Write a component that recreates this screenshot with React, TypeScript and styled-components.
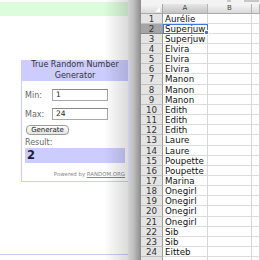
import React from "react";
import styled, { createGlobalStyle } from "styled-components";

const Global = createGlobalStyle`
  html, body { margin: 0; padding: 0; background: #fff; }
  body { width: 260px; height: 260px; overflow: hidden; font-family: "DejaVu Sans", Verdana, sans-serif; }
`;

const Screen = styled.div`
  display: flex;
  width: 260px;
  height: 260px;
  overflow: hidden;
`;

const WebPage = styled.div`
  position: relative;
  width: 128px;
  flex: none;
  display: flex;
  flex-direction: column;
  padding-top: 2px;
  box-sizing: border-box;
  background: #fff;
  &::after {
    content: "";
    position: absolute;
    top: 0;
    right: 0;
    width: 24px;
    height: 100%;
    background: linear-gradient(to right, rgba(0,0,0,0), rgba(0,0,0,0.14));
  }
`;

const GreenBand = styled.div`
  height: 14px;
  background: #dcfcdc;
`;

const Widget = styled.div`
  margin: 44px 0 0 21px;
  width: 108px;
  border: 1px solid #ccccff;
  box-sizing: border-box;
  display: flex;
  flex-direction: column;
  font-size: 8px;
  color: #666;
`;

const Header = styled.div`
  background: #ccccff;
  color: #333;
  text-align: center;
  font-size: 8px;
  line-height: 10.5px;
  height: 21px;
  margin-top: -1px;
`;

const Body = styled.div`
  display: flex;
  flex-direction: column;
  padding: 0 2px 0 3px;
`;

const FieldRow = styled.label<{ $top: number }>`
  display: flex;
  align-items: center;
  height: 12px;
  margin-top: ${(p) => p.$top}px;
`;

const FieldLabel = styled.span`
  width: 27px;
  color: #666;
`;

const Input = styled.div`
  width: 56px;
  height: 12px;
  box-sizing: border-box;
  border: 1px solid #a8a8a8;
  border-top-color: #888;
  background: #fff;
  color: #222;
  font-size: 7.5px;
  line-height: 10px;
  padding-left: 3px;
`;

const Button = styled.div`
  margin-top: 5px;
  width: 43px;
  height: 10px;
  box-sizing: border-box;
  border: 1px solid #9a9a9a;
  border-radius: 4px;
  background: linear-gradient(#fdfdfd, #e4e4e4);
  color: #222;
  font-size: 7px;
  line-height: 8px;
  text-align: center;
  margin-left: 1px;
`;

const ResultLabel = styled.div`
  margin-top: 3px;
  line-height: 10px;
  color: #666;
`;

const ResultBox = styled.div`
  height: 15px;
  width: 100px;
  background: #ccccff;
  color: #1c1c3a;
  font-size: 11.5px;
  font-weight: bold;
  line-height: 15px;
  padding-left: 2px;
  box-sizing: border-box;
`;

const Powered = styled.div`
  margin: 7px 0 3px;
  text-align: right;
  font-size: 5.4px;
  line-height: 8px;
  color: #888;
  padding-right: 1px;
  & u { text-decoration: underline; }
`;

const BottomLine = styled.div`
  margin-top: auto;
  margin-bottom: 5px;
  height: 1px;
  background: #ccccf4;
`;

const WindowEdge = styled.div`
  width: 13px;
  flex: none;
  background: linear-gradient(to right, #d4d4d4, #bdbdbd 45%, #999 85%, #8c8c8c);
`;

const Sheet = styled.div`
  flex: 1;
  display: flex;
  flex-direction: column;
  background: #fff;
  font-size: 8.7px;
  color: #111;
`;

const TopStrip = styled.div`
  height: 4px;
  flex: none;
  background: #f3f3f3;
  display: flex;
  align-items: flex-start;
`;

const StripBit = styled.div<{ $w: number; $ml: number }>`
  width: ${(p) => p.$w}px;
  margin-left: ${(p) => p.$ml}px;
  height: 2px;
  background: #c8c8c8;
`;

const Grid = styled.div`
  display: grid;
  grid-template-columns: 22px 45px 44px 1fr;
  grid-template-rows: 9.5px;
  grid-auto-rows: 10.16px;
`;

const Corner = styled.div`
  position: relative;
  background: linear-gradient(#f6f6f6, #dadada);
  border-right: 1px solid #aaa;
  border-bottom: 1px solid #aaa;
  box-sizing: border-box;
  &::after {
    content: "";
    position: absolute;
    right: 2px;
    bottom: 1px;
    border-left: 5px solid transparent;
    border-bottom: 5px solid #fff;
  }
`;

const ColHead = styled.div<{ $sel?: boolean }>`
  background: ${(p) => (p.$sel ? "linear-gradient(#e6e6e6, #c4c4c4)" : "linear-gradient(#f6f6f6, #dadada)")};
  border-right: 1px solid #b4b4b4;
  border-bottom: 1px solid #aaa;
  box-sizing: border-box;
  text-align: center;
  font-size: 7px;
  line-height: 9px;
  color: #444;
`;

const RowHead = styled.div<{ $sel?: boolean }>`
  background: ${(p) => (p.$sel ? "#a4a4a4" : "#e4e4e4")};
  border-right: 1px solid #9c9c9c;
  border-bottom: 1px solid ${(p) => (p.$sel ? "#888" : "#c2c2c2")};
  box-sizing: border-box;
  text-align: center;
  padding-top: 1px;
  line-height: 9.16px;
  color: #333;
`;

const Cell = styled.div<{ $sel?: boolean }>`
  position: relative;
  border-right: 1px solid #d6d6d6;
  border-bottom: 1px solid #dcdcdc;
  box-sizing: border-box;
  padding-left: 2px;
  padding-top: 1px;
  line-height: 9.16px;
  white-space: nowrap;
  overflow: visible;
  ${(p) =>
    p.$sel &&
    `
    outline: 1px solid #3b78d8;
    outline-offset: -1px;
    z-index: 1;
    &::after {
      content: "";
      position: absolute;
      right: -2px;
      bottom: -2px;
      width: 3px;
      height: 3px;
      background: #3b78d8;
      border: 0.5px solid #fff;
    }
  `}
`;

const names = [
  "Aurélie", "Superjuw", "Superjuw", "Elvira", "Elvira", "Elvira",
  "Manon", "Manon", "Manon", "Edith", "Edith", "Edith",
  "Laure", "Laure", "Poupette", "Poupette", "Marina", "Onegirl",
  "Onegirl", "Onegirl", "Onegirl", "Sib", "Sib", "Eitteb",
];

export default function App() {
  return (
    <>
      <Global />
      <Screen>
        <WebPage>
          <GreenBand />
          <Widget>
            <Header>
              True Random Number
              <br />
              Generator
            </Header>
            <Body>
              <FieldRow $top={8}>
                <FieldLabel>Min:</FieldLabel>
                <Input>1</Input>
              </FieldRow>
              <FieldRow $top={7}>
                <FieldLabel>Max:</FieldLabel>
                <Input>24</Input>
              </FieldRow>
              <Button>Generate</Button>
              <ResultLabel>Result:</ResultLabel>
              <ResultBox>2</ResultBox>
              <Powered>
                Powered by <u>RANDOM.ORG</u>
              </Powered>
            </Body>
          </Widget>
          <BottomLine />
        </WebPage>
        <WindowEdge />
        <Sheet>
          <TopStrip>
            <StripBit $w={4} $ml={86} />
            <StripBit $w={15} $ml={13} />
          </TopStrip>
          <Grid>
            <Corner />
            <ColHead $sel>A</ColHead>
            <ColHead>B</ColHead>
            <ColHead />
            {names.map((n, i) => (
              <React.Fragment key={i}>
                <RowHead $sel={i === 1}>{i + 1}</RowHead>
                <Cell $sel={i === 1}>{n}</Cell>
                <Cell />
                <Cell />
              </React.Fragment>
            ))}
            <RowHead />
            <Cell />
            <Cell />
            <Cell />
          </Grid>
        </Sheet>
      </Screen>
    </>
  );
}
